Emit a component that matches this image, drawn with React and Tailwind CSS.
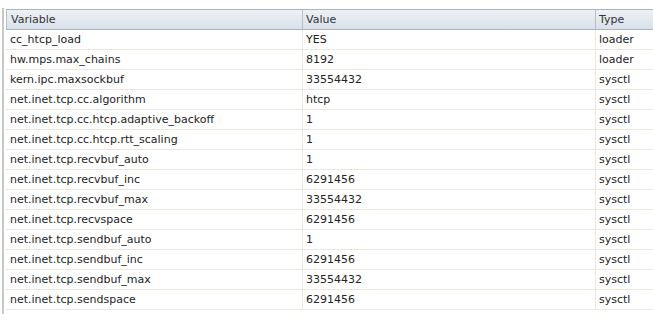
import React from 'react';

const rows = [
  ['cc_htcp_load', 'YES', 'loader'],
  ['hw.mps.max_chains', '8192', 'loader'],
  ['kern.ipc.maxsockbuf', '33554432', 'sysctl'],
  ['net.inet.tcp.cc.algorithm', 'htcp', 'sysctl'],
  ['net.inet.tcp.cc.htcp.adaptive_backoff', '1', 'sysctl'],
  ['net.inet.tcp.cc.htcp.rtt_scaling', '1', 'sysctl'],
  ['net.inet.tcp.recvbuf_auto', '1', 'sysctl'],
  ['net.inet.tcp.recvbuf_inc', '6291456', 'sysctl'],
  ['net.inet.tcp.recvbuf_max', '33554432', 'sysctl'],
  ['net.inet.tcp.recvspace', '6291456', 'sysctl'],
  ['net.inet.tcp.sendbuf_auto', '1', 'sysctl'],
  ['net.inet.tcp.sendbuf_inc', '6291456', 'sysctl'],
  ['net.inet.tcp.sendbuf_max', '33554432', 'sysctl'],
  ['net.inet.tcp.sendspace', '6291456', 'sysctl'],
];

export default function App() {
  return (
    <div
      className="w-[653px] h-[321px] bg-white overflow-hidden flex text-[11px] text-[#222]"
      style={{ fontFamily: '"DejaVu Sans", Verdana, sans-serif' }}
    >
      {/* left frame edge */}
      <div className="ml-[2px] mt-[8px] w-[2px] h-[306px] bg-[#c8c8c8]" />

      <div className="ml-[2px] mt-[9px] flex-1 min-w-0">
        {/* header */}
        <div className="grid grid-cols-[296px_293px_80px] h-[21px] border-t border-b border-[#a9b4c2] bg-gradient-to-b from-[#eef1f5] to-[#d9e0e9] text-[#333]">
          <div className="pl-[4px] pt-[1px] flex items-center border-l border-[#b5bfcb]">Variable</div>
          <div className="pl-[3px] pt-[1px] flex items-center border-l border-[#b5bfcb]">Value</div>
          <div className="pl-[3px] pt-[1px] flex items-center border-l border-[#b5bfcb]">Type</div>
        </div>

        {/* body */}
        {rows.map(([name, value, type]) => (
          <div
            key={name}
            className="grid grid-cols-[296px_293px_80px] h-[20px] border-b border-[#ebe7dc]"
          >
            <div className="pl-[4px] pt-[2px] flex items-center">{name}</div>
            <div className="pl-[3px] pt-[2px] flex items-center border-l border-[#ebe7dc]">{value}</div>
            <div className="pl-[3px] pt-[2px] flex items-center border-l border-[#ebe7dc]">{type}</div>
          </div>
        ))}
      </div>
    </div>
  );
}
